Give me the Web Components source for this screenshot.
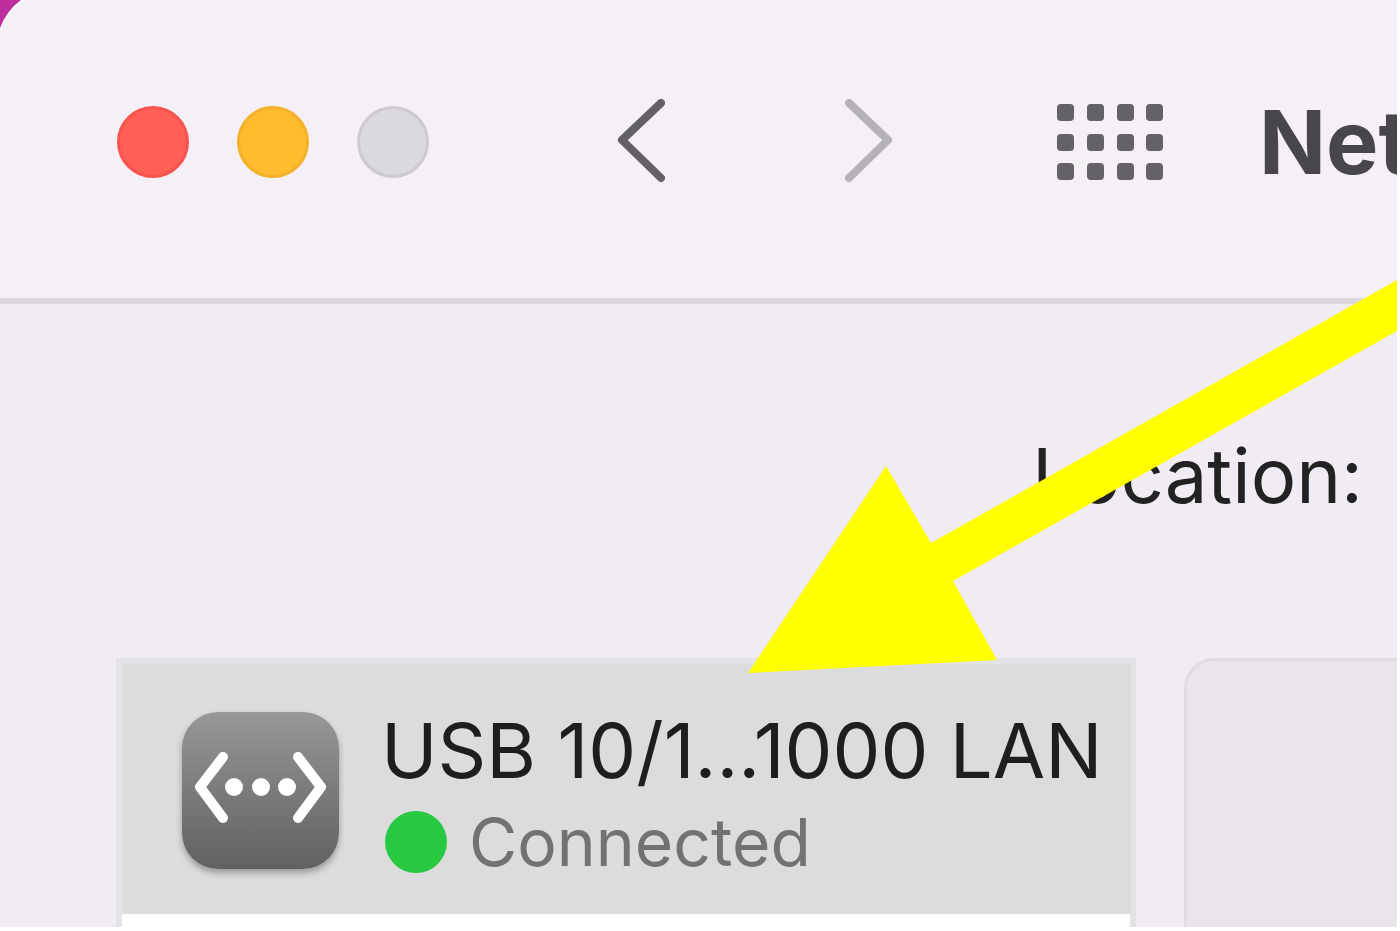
<!DOCTYPE html>
<html lang="en">
<head>
<meta charset="utf-8">
<title>Network</title>
<style>
  html, body {
    height: 100%;
    margin: 0;
  }
  body {
    box-sizing: border-box;
    padding: 0 3px 4px 0;
    background: #fff;
    font-family: Inter, "Liberation Sans", sans-serif;
    color: #222;
    overflow: hidden;
  }
</style>
</head>
<body>
<settings-window>
  <window-toolbar slot="toolbar">Net</window-toolbar>
  <location-field slot="location">Location:</location-field>
  <service-list slot="services">
    <service-row status="Connected">USB 10/1...1000 LAN</service-row>
  </service-list>
  <detail-panel slot="detail"></detail-panel>
  <pointer-arrow slot="overlay"></pointer-arrow>
</settings-window>

<script>
const html = String.raw;

class SettingsWindow extends HTMLElement {
  constructor() {
    super();
    this.attachShadow({ mode: "open" });
    this.shadowRoot.innerHTML = html`
      <style>
        :host {
          display: flex;
          flex-direction: column;
          position: relative;
          height: 100%;
          background: #f1ecf4;
          overflow: hidden;
        }
        .columns {
          flex: 1;
          display: grid;
          grid-template-columns: 1020fr 213fr;
          gap: 48px;
          padding-left: 116px;
          min-height: 0;
        }
        .corner {
          position: absolute;
          top: 0;
          left: 0;
        }
      </style>
      <slot name="toolbar"></slot>
      <slot name="location"></slot>
      <div class="columns">
        <slot name="services"></slot>
        <slot name="detail"></slot>
      </div>
      <svg class="corner" width="28" height="34" aria-hidden="true">
        <path d="M0 0H25Q9 10 0 31Z" fill="#fff" />
        <path d="M0 0H21Q7 10 0 28Z" fill="#be2f9d" />
      </svg>
      <slot name="overlay"></slot>
    `;
  }
}
customElements.define("settings-window", SettingsWindow);

class WindowToolbar extends HTMLElement {
  constructor() {
    super();
    this.attachShadow({ mode: "open" });
    const dots = [0, 30, 60, 89]
      .map((x) =>
        [0, 30, 59]
          .map((y) => `<rect x="${x}" y="${y}" width="17" height="17" rx="4" />`)
          .join("")
      )
      .join("");
    this.shadowRoot.innerHTML = html`
      <style>
        :host {
          display: flex;
          align-items: center;
          box-sizing: border-box;
          padding: 88px 0 102px 117px;
          border-bottom: 6px solid #dcd7df;
          background: #f5f0f8;
          overflow: hidden;
        }
        button {
          display: block;
          flex: none;
          padding: 0;
          border: 0;
          background: none;
        }
        svg {
          display: block;
        }
        .lights {
          display: flex;
          flex: none;
          gap: 48px;
        }
        .lights button {
          width: 72px;
          height: 72px;
          border-radius: 50%;
          border: 3px solid var(--rim);
          background: var(--face);
        }
        .close {
          --face: #ff5f57;
          --rim: #f7544d;
        }
        .minimize {
          --face: #febc2e;
          --rim: #f4b12a;
        }
        .zoom {
          --face: #dcd8df;
          --rim: #cdc9d0;
        }
        .nav {
          display: flex;
          flex: none;
          gap: 180px;
          margin: 0 164px 0 188px;
        }
        .nav path {
          fill: none;
          stroke: #646166;
          stroke-width: 8;
          stroke-linecap: round;
          stroke-linejoin: round;
        }
        .nav button:disabled path {
          stroke: #b5b1b8;
        }
        h1 {
          flex: none;
          margin: 0 0 0 96px;
          font-size: 88px;
          line-height: 108px;
          font-weight: 700;
          color: #48464a;
        }
      </style>
      <div class="lights">
        <button class="close" aria-label="Close"></button>
        <button class="minimize" aria-label="Minimize"></button>
        <button class="zoom" aria-label="Zoom" disabled></button>
      </div>
      <div class="nav">
        <button aria-label="Back">
          <svg width="48" height="86"><path d="M44 4L5 41L44 79" /></svg>
        </button>
        <button aria-label="Forward" disabled>
          <svg width="48" height="86"><path d="M4 4L43 41L4 79" /></svg>
        </button>
      </div>
      <button aria-label="Show all">
        <svg width="106" height="76" fill="#656168">${dots}</svg>
      </button>
      <h1><slot></slot></h1>
    `;
  }
}
customElements.define("window-toolbar", WindowToolbar);

class LocationField extends HTMLElement {
  constructor() {
    super();
    this.attachShadow({ mode: "open" });
    this.shadowRoot.innerHTML = html`
      <style>
        :host {
          display: flex;
          justify-content: flex-end;
          padding: 123px 34px 135px;
          font-size: 76px;
          line-height: 96px;
        }
      </style>
      <span><slot></slot></span>
    `;
  }
}
customElements.define("location-field", LocationField);

class ServiceList extends HTMLElement {
  constructor() {
    super();
    this.attachShadow({ mode: "open" });
    this.shadowRoot.innerHTML = html`
      <style>
        :host {
          display: block;
          min-width: 0;
          border: 6px solid #e3e2e4;
          border-bottom: 0;
          background: #fff;
        }
      </style>
      <slot></slot>
    `;
  }
}
customElements.define("service-list", ServiceList);

class ServiceRow extends HTMLElement {
  constructor() {
    super();
    this.attachShadow({ mode: "open" });
    this.shadowRoot.innerHTML = html`
      <style>
        :host {
          display: block;
        }
        button {
          display: flex;
          align-items: center;
          gap: 42px;
          width: 100%;
          padding: 38px 0 36px 60px;
          border: 0;
          background: #dcdcdc;
          font: inherit;
          color: #1e1e1e;
          text-align: left;
        }
        .icon {
          flex: none;
          width: 157px;
          height: 157px;
          border-radius: 36px;
          background: linear-gradient(#98989a, #7b7b7c 50%, #606163);
          box-shadow: 0 4px 6px rgba(0, 0, 0, 0.3);
        }
        .text {
          display: flex;
          flex-direction: column;
          gap: 8px;
          white-space: nowrap;
        }
        .name {
          font-size: 76px;
          line-height: 96px;
        }
        .status {
          display: flex;
          align-items: center;
          gap: 22px;
          padding-left: 4px;
          font-size: 66px;
          line-height: 72px;
          color: #717274;
        }
        .status::before {
          content: "";
          width: 62px;
          height: 62px;
          border-radius: 50%;
          background: #28c840;
        }
      </style>
      <button>
        <svg class="icon" viewBox="0 0 157 157" fill="none" aria-hidden="true">
          <g stroke="#fff" stroke-width="10" stroke-linecap="round" stroke-linejoin="round">
            <path d="M41 45L18 75L41 106" />
            <path d="M116 45L139 75L116 106" />
          </g>
          <g fill="#fff">
            <circle cx="52" cy="75" r="9" />
            <circle cx="79" cy="75" r="9" />
            <circle cx="105" cy="75" r="9" />
          </g>
        </svg>
        <span class="text">
          <span class="name"><slot></slot></span>
          <span class="status">${this.getAttribute("status")}</span>
        </span>
      </button>
    `;
  }
}
customElements.define("service-row", ServiceRow);

class DetailPanel extends HTMLElement {
  constructor() {
    super();
    this.attachShadow({ mode: "open" });
    this.shadowRoot.innerHTML = html`
      <style>
        :host {
          display: block;
          border: solid #e1dce3;
          border-width: 3px 0 0 3px;
          border-top-left-radius: 30px;
          background: #eae5eb;
        }
      </style>
    `;
  }
}
customElements.define("detail-panel", DetailPanel);

// Annotation lying over the window, pointing at the selected service.
class PointerArrow extends HTMLElement {
  constructor() {
    super();
    this.attachShadow({ mode: "open" });
    this.shadowRoot.innerHTML = html`
      <style>
        :host {
          position: absolute;
          top: 280px;
          right: 0;
          pointer-events: none;
        }
        svg {
          display: block;
        }
      </style>
      <svg width="649" height="393" aria-hidden="true">
        <path d="M0 393L138 186L183 263L649 0V51L205 301L249 380Z" fill="#ff0" />
      </svg>
    `;
  }
}
customElements.define("pointer-arrow", PointerArrow);
</script>
</body>
</html>
